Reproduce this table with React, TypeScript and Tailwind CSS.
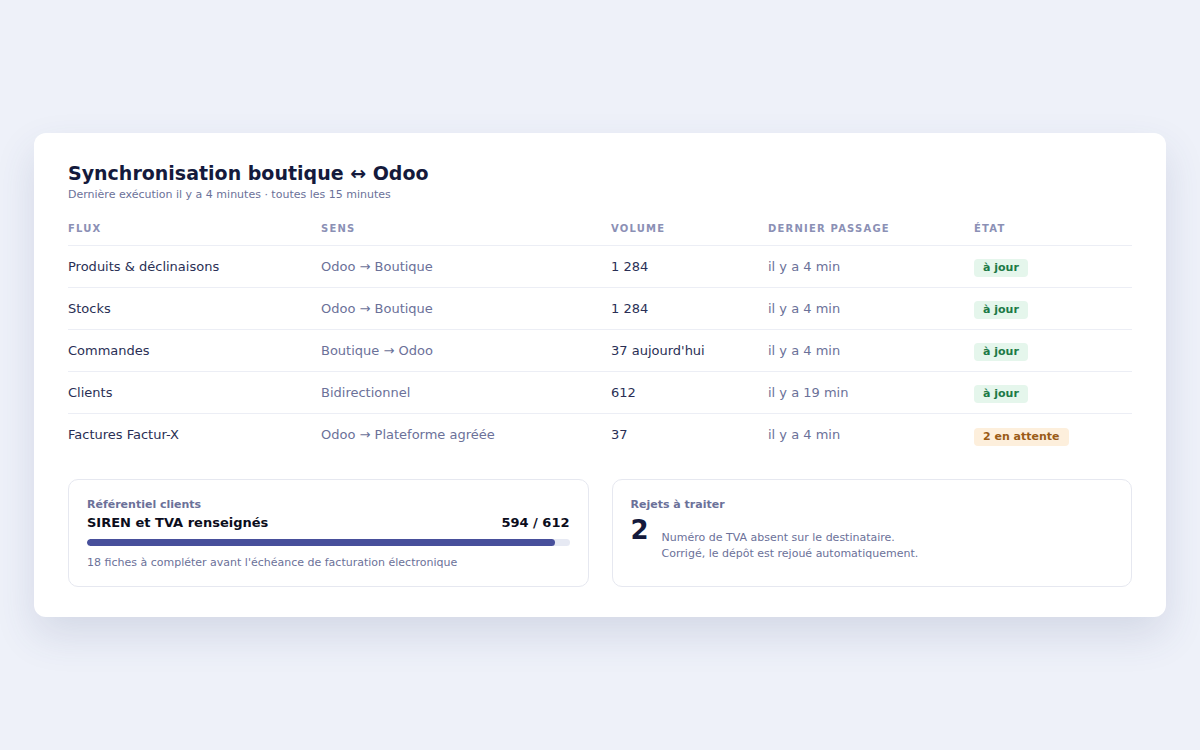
const rows = [
  { flux: "Produits & déclinaisons", sens: "Odoo → Boutique", volume: "1 284", last: "il y a 4 min", state: "ok" },
  { flux: "Stocks", sens: "Odoo → Boutique", volume: "1 284", last: "il y a 4 min", state: "ok" },
  { flux: "Commandes", sens: "Boutique → Odoo", volume: "37 aujourd'hui", last: "il y a 4 min", state: "ok" },
  { flux: "Clients", sens: "Bidirectionnel", volume: "612", last: "il y a 19 min", state: "ok" },
  { flux: "Factures Factur-X", sens: "Odoo → Plateforme agréée", volume: "37", last: "il y a 4 min", state: "pending" },
];

function StateBadge({ state }: { state: string }) {
  if (state === "pending") {
    return (
      <span className="inline-block rounded-[4px] bg-[#fdefdc] px-[9px] py-[2px] text-[11px] font-bold leading-[14px] text-[#9a5b16]">
        2 en attente
      </span>
    );
  }
  return (
    <span className="inline-block rounded-[4px] bg-[#e5f6ec] px-[9px] py-[2px] text-[11px] font-bold leading-[14px] text-[#1d7a46]">
      à jour
    </span>
  );
}

export default function App() {
  const done = 594;
  const total = 612;

  return (
    <div className="flex min-h-screen items-center justify-center bg-[#eef1f9] font-['DejaVu_Sans',sans-serif]">
      <div className="w-[1132px] rounded-[12px] bg-white px-[34px] pt-[28px] pb-[30px] shadow-[0_18px_40px_rgba(60,70,120,0.14)]">
        <h1 className="text-[19px] font-bold leading-[24px] text-[#141a3c]">
          Synchronisation boutique ↔ Odoo
        </h1>
        <p className="mt-[2px] text-[11px] leading-[16px] text-[#6b7199]">
          Dernière exécution il y a 4 minutes · toutes les 15 minutes
        </p>

        <table className="mt-[10px] w-full table-fixed border-collapse">
          <colgroup>
            <col className="w-[253px]" />
            <col className="w-[290px]" />
            <col className="w-[157px]" />
            <col className="w-[206px]" />
            <col />
          </colgroup>
          <thead>
            <tr className="border-b border-[#eceef5]">
              {["Flux", "Sens", "Volume", "Dernier passage", "État"].map((h) => (
                <th
                  key={h}
                  className="pt-[9px] pb-[9px] text-left text-[10px] font-bold uppercase leading-[14px] tracking-[0.12em] text-[#8b90b5]"
                >
                  {h}
                </th>
              ))}
            </tr>
          </thead>
          <tbody>
            {rows.map((r, i) => (
              <tr
                key={r.flux}
                className={i < rows.length - 1 ? "border-b border-[#eceef5]" : ""}
              >
                <td className="h-[42px] text-[13px] text-[#2a2f55]">{r.flux}</td>
                <td className="text-[13px] text-[#6b7199]">{r.sens}</td>
                <td className="text-[13px] text-[#2a2f55]">{r.volume}</td>
                <td className="text-[13px] text-[#6b7199]">{r.last}</td>
                <td>
                  <StateBadge state={r.state} />
                </td>
              </tr>
            ))}
          </tbody>
        </table>

        <div className="mt-[24px] grid grid-cols-2 gap-[23px]">
          <div className="rounded-[10px] border border-[#e6e8f0] px-[18px] pt-[18px] pb-[15px]">
            <div className="text-[11px] font-bold leading-[14px] text-[#6b7199]">
              Référentiel clients
            </div>
            <div className="mt-[2px] flex items-center justify-between text-[13px] font-bold leading-[18px] text-[#0b0d1c]">
              <span>SIREN et TVA renseignés</span>
              <span>
                {done} / {total}
              </span>
            </div>
            <div className="mt-[7px] h-[7px] w-full overflow-hidden rounded-full bg-[#e6e9f3]">
              <div
                className="h-full rounded-full bg-[#474f9b]"
                style={{ width: `${(done / total) * 100}%` }}
              />
            </div>
            <div className="mt-[9px] text-[11px] leading-[16px] text-[#6b7199]">
              18 fiches à compléter avant l'échéance de facturation électronique
            </div>
          </div>

          <div className="rounded-[10px] border border-[#e6e8f0] px-[18px] pt-[18px] pb-[15px]">
            <div className="text-[11px] font-bold leading-[14px] text-[#6b7199]">
              Rejets à traiter
            </div>
            <div className="mt-[4px] flex items-start gap-[13px]">
              <span className="text-[26px] font-bold leading-[28px] text-[#141a3c]">2</span>
              <div className="pt-[14px] text-[11px] leading-[16px] text-[#6b7199]">
                <div>Numéro de TVA absent sur le destinataire.</div>
                <div>Corrigé, le dépôt est rejoué automatiquement.</div>
              </div>
            </div>
          </div>
        </div>
      </div>
    </div>
  );
}
